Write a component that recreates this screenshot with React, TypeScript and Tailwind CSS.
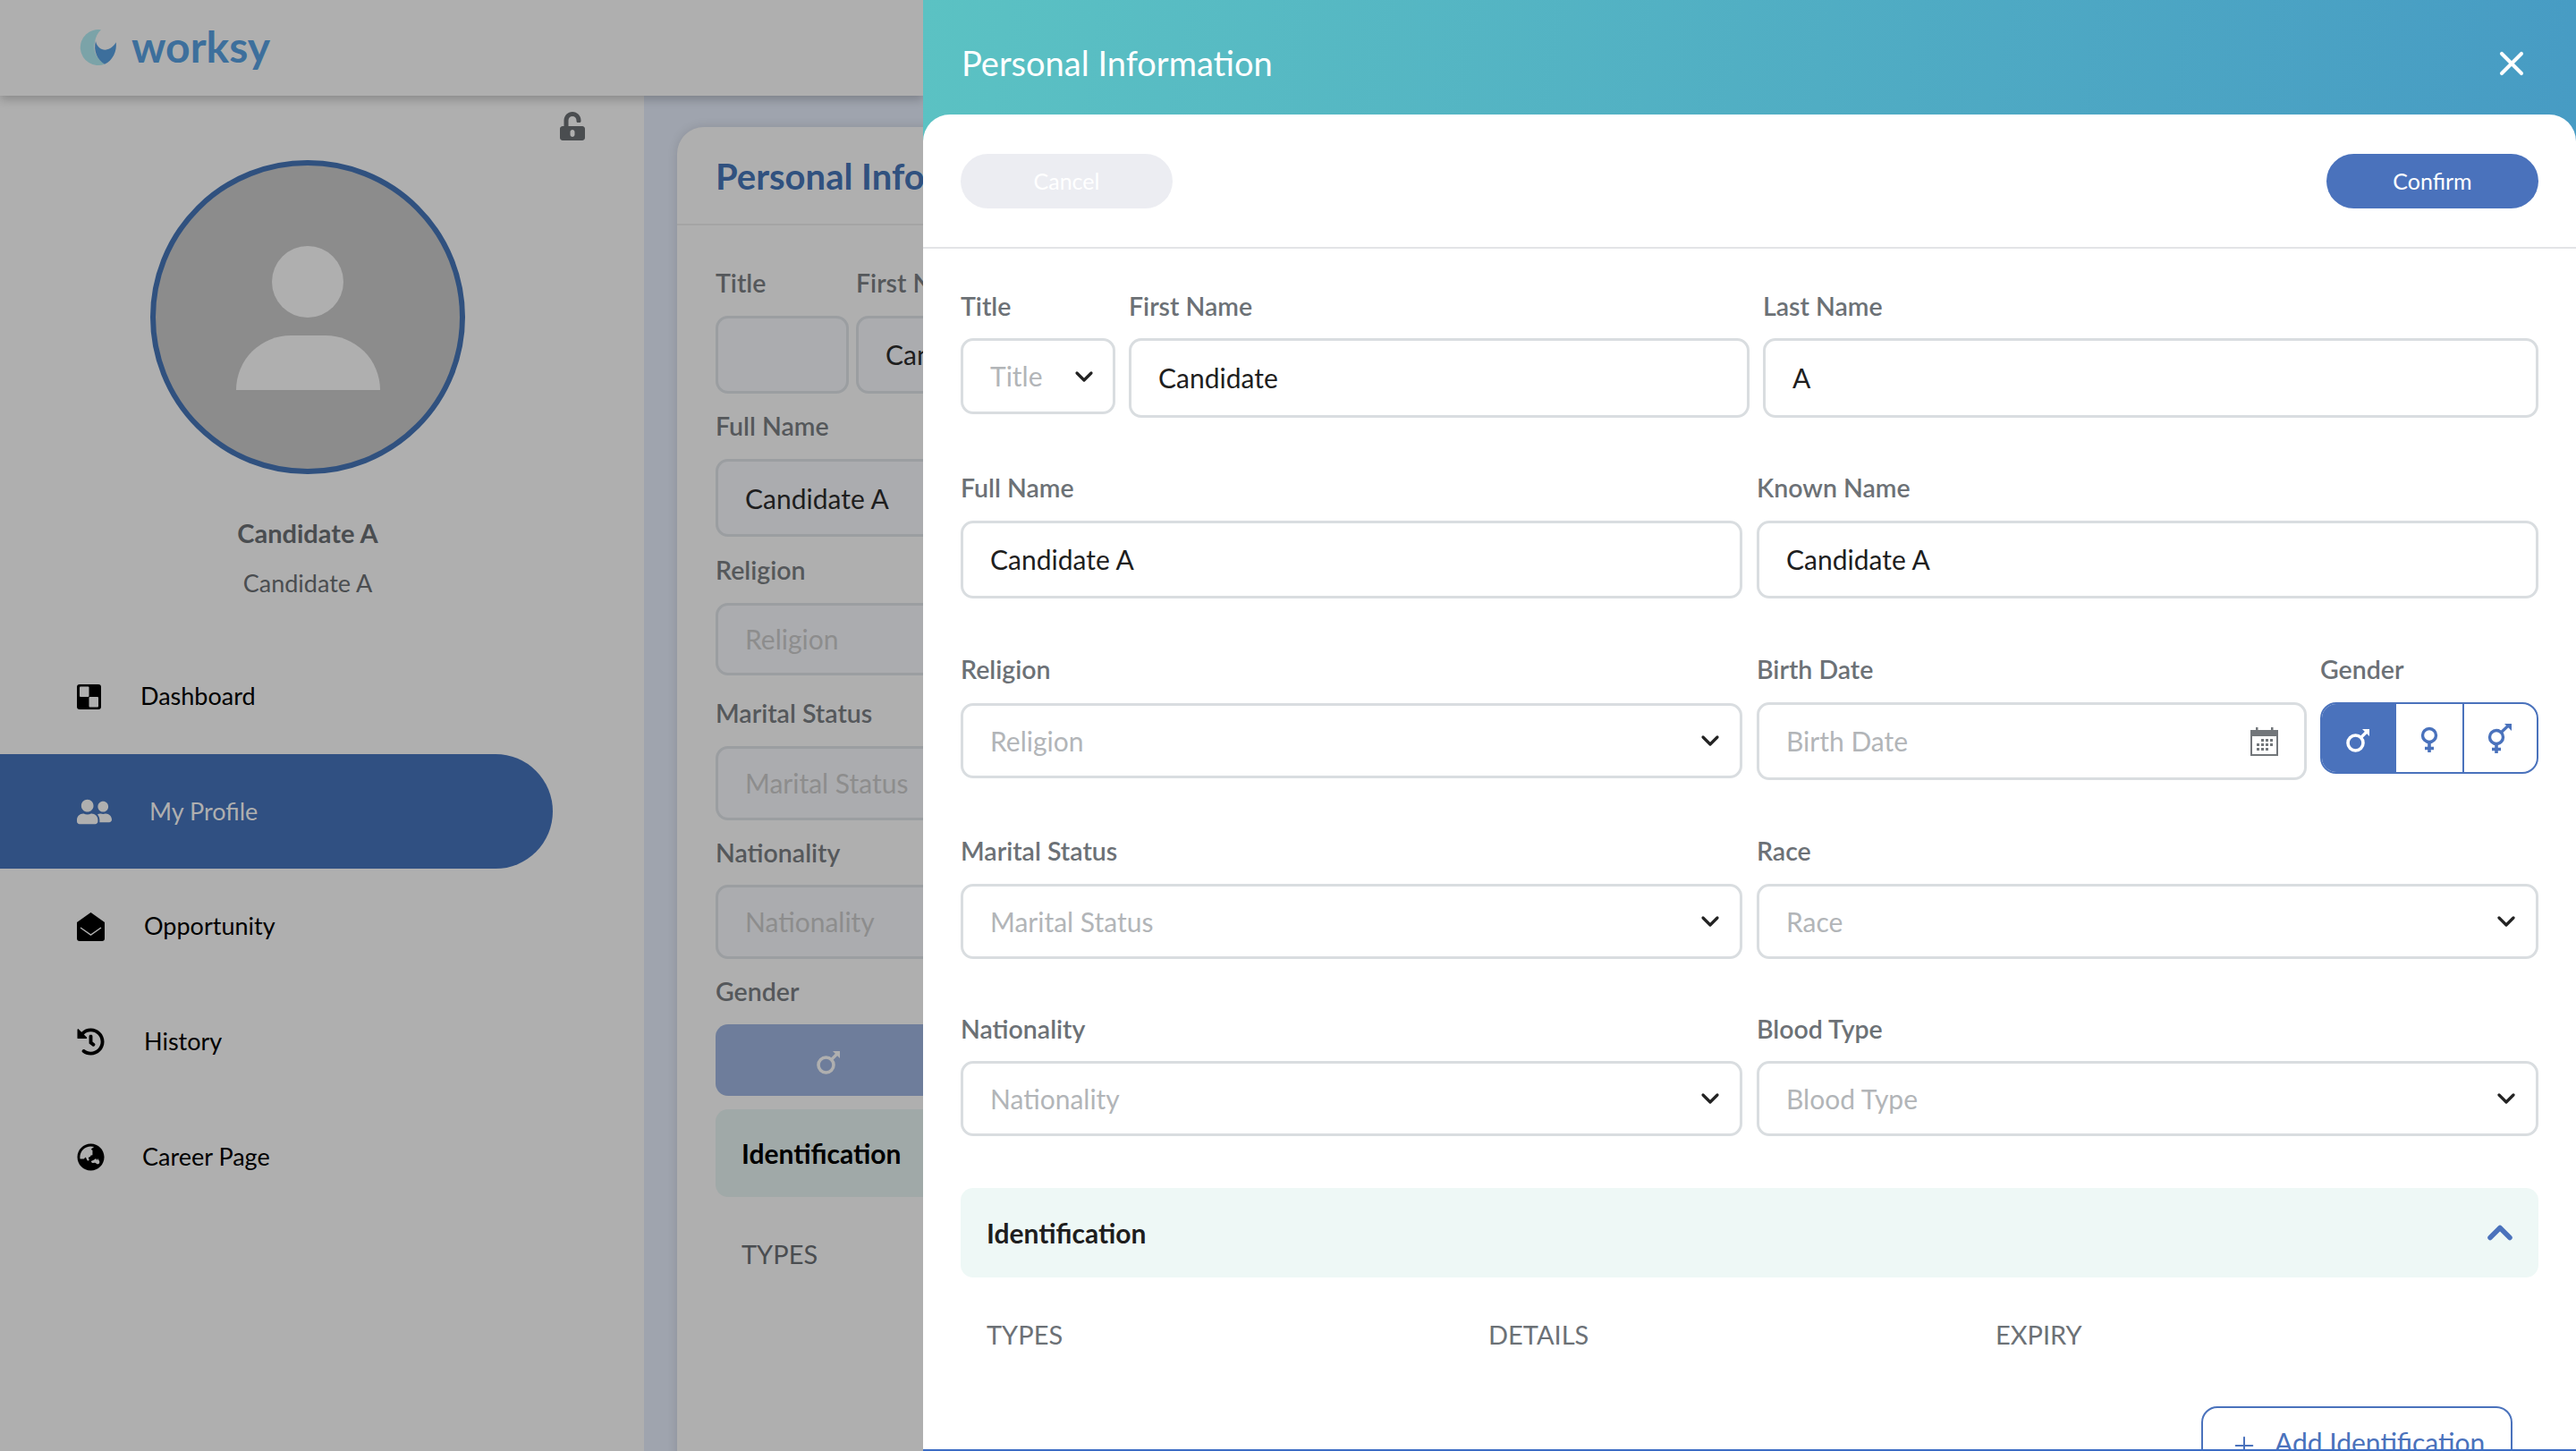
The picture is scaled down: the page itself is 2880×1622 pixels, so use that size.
import React from "react";
import { FaUnlockAlt, FaUserFriends, FaHistory, FaGlobeAsia } from "react-icons/fa";
import { ChevronDown, ChevronUp, X, Plus } from "lucide-react";

const formFont = "font-['Lato','Noto_Sans',sans-serif]";

function Logo() {
  return (
    <svg width="42" height="41" viewBox="0 0 42 41" className="shrink-0">
      <path d="M24 0.300A20 20 0 1 0 28 38.700C20 34 14 24 17 14C18 8 20 4 24 0.300Z" fill="#7ba3a8" />
      <path d="M18 13C19 19 24 23 29 22.700C34 22 38 19 40.700 14.300C42 24 37 35 28 38.700C20 34 15 24 18 13Z" fill="#3d6f9c" />
    </svg>
  );
}

function DashIcon() {
  return (
    <svg width="27" height="28" viewBox="0 0 27 28" className="shrink-0">
      <rect width="27" height="28" rx="3" fill="#000" />
      <rect x="3" y="2.500" width="10.500" height="11.500" rx="1" fill="#afafaf" />
      <rect x="13.500" y="14" width="10.500" height="11.500" rx="1" fill="#afafaf" />
    </svg>
  );
}

function MailIcon() {
  return (
    <svg width="31" height="32" viewBox="0 0 31 32" className="shrink-0">
      <path d="M15.500 0L31 11V29a3 3 0 0 1-3 3H3a3 3 0 0 1-3-3V11Z" fill="#000" />
      <path d="M4 17L15.500 25L27 17" fill="none" stroke="#afafaf" strokeWidth="1.500" />
    </svg>
  );
}

function CalendarIcon() {
  return (
    <svg width="31" height="32" viewBox="0 0 31 32" className="shrink-0" fill="#72767a">
      <path d="M0 3H31V32H0ZM2 10V30H29V10Z" fillRule="evenodd" />
      <rect x="6" y="0" width="2.500" height="6" />
      <rect x="23" y="0" width="2.500" height="6" />
      {[[12, 13], [17, 13], [22, 13], [7, 18], [12, 18], [17, 18], [22, 18], [7, 23], [12, 23], [17, 23]].map(([x, y]) => (
        <rect key={`${x}-${y}`} x={x} y={y} width="3" height="3" />
      ))}
    </svg>
  );
}

function MaleIcon({ color }: { color: string }) {
  return (
    <svg width="30" height="30" viewBox="0 0 30 30" fill="none" stroke={color}>
      <circle cx="11.500" cy="18.500" r="8.500" strokeWidth="3.600" />
      <path d="M17.500 12.500L25 5" strokeWidth="3.200" />
      <path d="M19 3H27V11Z" fill={color} stroke="none" />
    </svg>
  );
}

function FemaleIcon({ color }: { color: string }) {
  return (
    <svg width="30" height="30" viewBox="0 0 30 30" fill="none" stroke={color}>
      <circle cx="15" cy="10" r="7.500" strokeWidth="3.400" />
      <path d="M15 18V29" strokeWidth="3.600" />
      <path d="M10 24.500H20" strokeWidth="3.400" />
    </svg>
  );
}

function BothIcon({ color }: { color: string }) {
  return (
    <svg width="36" height="34" viewBox="0 0 36 34" fill="none" stroke={color}>
      <circle cx="13" cy="15" r="7.500" strokeWidth="3.400" />
      <path d="M13 23V33" strokeWidth="3.600" />
      <path d="M8 28.500H18" strokeWidth="3.400" />
      <path d="M18.500 9.500L27 1.500" strokeWidth="3.200" />
      <path d="M22 0H30V8Z" fill={color} stroke="none" />
    </svg>
  );
}

function Label({ children }: { children: React.ReactNode }) {
  return <div className="h-[36px] whitespace-nowrap text-[28.5px] font-semibold leading-[36px] text-[#6c7176]">{children}</div>;
}

function TextBox({ value, className }: { value: string; className: string }) {
  return (
    <div className={`flex items-center rounded-[14px] border-[3px] border-[#d9dde0] bg-white pl-[30px] text-[30px] text-[#1e1e1e] ${className}`}>
      {value}
    </div>
  );
}

function Select({ placeholder }: { placeholder: string }) {
  return (
    <div className="flex h-[84px] items-center justify-between rounded-[14px] border-[3px] border-[#d9dde0] bg-white pl-[30px] pr-[17px] text-[30px] text-[#b2b5b8]">
      <span>{placeholder}</span>
      <ChevronDown size={32} color="#222222" strokeWidth={2.400} />
    </div>
  );
}

function NavRow({ icon, label, textClass, heightClass, active }: { icon: React.ReactNode; label: string; textClass: string; heightClass: string; active?: boolean }) {
  return (
    <div className={`flex items-center pl-[86px] text-[27px] ${heightClass} ${active ? "w-[618px] rounded-r-[64px] bg-[#305082] text-[#afafaf]" : "text-black"}`}>
      {icon}
      <span className={textClass}>{label}</span>
    </div>
  );
}

function CardLabel({ children, className }: { children: React.ReactNode; className: string }) {
  return <div className={`h-[36px] text-[28.5px] font-semibold leading-[36px] text-[#55585b] ${className}`}>{children}</div>;
}

function CardInput({ children, className }: { children?: React.ReactNode; className: string }) {
  return <div className={`flex items-center rounded-[14px] border-[3px] border-[#9b9ea1] bg-[#abacaf] pl-[30px] text-[30px] ${className}`}>{children}</div>;
}

function BackgroundPage() {
  return (
    <div className="flex h-full w-[1032px] shrink-0 flex-col overflow-hidden bg-[#afafaf] font-['Lato',sans-serif]">
      <div className="relative z-10 flex h-[107px] shrink-0 items-center gap-[16px] bg-[#afafaf] pl-[89px] shadow-[0_4px_10px_rgba(0,0,0,0.22)]">
        <Logo />
        <span className="-mt-[4px] text-[48px] font-bold leading-none text-[#3d6f9c]">worksy</span>
      </div>
      <div className="flex min-h-0 flex-1">
        <div className="flex w-[720px] shrink-0 flex-col">
          <FaUnlockAlt size={32} color="#4a4d50" className="ml-[624px] mt-[18px]" />
          <div className="ml-[168px] mt-[22px] flex h-[351px] w-[352px] flex-col items-center rounded-full border-[6px] border-[#30517f] bg-[#8c8c8c] pt-[90px]">
            <div className="h-[80px] w-[80px] rounded-full bg-[#afafaf]" />
            <div className="mt-[20px] h-[61px] w-[161px] rounded-t-[80px] bg-[#afafaf]" />
          </div>
          <div className="w-[688px] text-center">
            <div className="mt-[48px] h-[36px] text-[29px] font-bold leading-[36px] text-[#4a4d50]">Candidate A</div>
            <div className="mt-[20px] h-[36px] text-[27px] leading-[36px] text-[#4a4d50]">Candidate A</div>
          </div>
          <div className="mt-[44px]">
            <NavRow heightClass="h-[129px]" textClass="ml-[44px]" icon={<DashIcon />} label="Dashboard" />
            <NavRow active heightClass="h-[128px]" textClass="ml-[42px]" icon={<FaUserFriends size={39} color="#afafaf" />} label="My Profile" />
            <NavRow heightClass="h-[129px]" textClass="ml-[44px]" icon={<MailIcon />} label="Opportunity" />
            <NavRow heightClass="h-[129px]" textClass="ml-[44px]" icon={<FaHistory size={31} color="#000000" />} label="History" />
            <NavRow heightClass="h-[128px]" textClass="ml-[42px]" icon={<FaGlobeAsia size={31} color="#000000" />} label="Career Page" />
          </div>
        </div>
        <div className="flex-1 bg-[#9fa4ae] pl-[37px] pt-[35px]">
          <div className="h-[1500px] w-[1200px] rounded-tl-[30px] bg-[#afafaf] shadow-[0_0_12px_rgba(0,0,0,0.12)]">
            <div className="flex h-[110px] items-center border-b-2 border-[#a4a4a4] pl-[43px] pt-[2px] text-[40px] font-bold text-[#30517f]">Personal Information</div>
            <div className="pl-[43px]">
              <div className="mt-[46px] flex gap-[8px]">
                <div className="w-[149px]">
                  <CardLabel className="mb-[19px]">Title</CardLabel>
                  <CardInput className="h-[87px]" />
                </div>
                <div className="w-[500px]">
                  <CardLabel className="mb-[19px]">First Name</CardLabel>
                  <CardInput className="h-[87px] text-[#1e1e1e]">Candidate</CardInput>
                </div>
              </div>
              <CardLabel className="mb-[19px] mt-[18px]">Full Name</CardLabel>
              <CardInput className="h-[87px] pt-[2px] text-[#1e1e1e]">Candidate A</CardInput>
              <CardLabel className="mb-[19px] mt-[19px]">Religion</CardLabel>
              <CardInput className="h-[81px] text-[#8d8d8d]">Religion</CardInput>
              <CardLabel className="mb-[19px] mt-[24px]">Marital Status</CardLabel>
              <CardInput className="h-[83px] text-[#8d8d8d]">Marital Status</CardInput>
              <CardLabel className="mb-[18px] mt-[18px]">Nationality</CardLabel>
              <CardInput className="h-[83px] text-[#8d8d8d]">Nationality</CardInput>
              <CardLabel className="mb-[19px] mt-[18px]">Gender</CardLabel>
              <div className="flex h-[80px] items-center rounded-l-[14px] bg-[#6e7d9b] pl-[112px] pt-[4px]">
                <MaleIcon color="#afafaf" />
              </div>
              <div className="mt-[15px] flex h-[98px] items-center rounded-l-[14px] bg-[#a0a9a8] pl-[29px] text-[30px] font-bold text-black">Identification</div>
              <div className="mt-[46px] h-[36px] pl-[29px] text-[29px] leading-[36px] text-[#4a4d50]">TYPES</div>
            </div>
          </div>
        </div>
      </div>
    </div>
  );
}

function Drawer() {
  return (
    <div className={`flex h-full flex-1 flex-col bg-[linear-gradient(100deg,#5bc2c3,#4496c4)] ${formFont}`}>
      <div className="flex h-[128px] shrink-0 items-center justify-between pl-[43px] pr-[50px] pt-[13px]">
        <span className="text-[38px] text-white">Personal Information</span>
        <X size={44} color="#ffffff" strokeWidth={2.200} />
      </div>
      <div className="min-h-0 flex-1 overflow-hidden rounded-t-[30px] border-b-2 border-[#3b6cc4] bg-white">
        <div className="flex h-[150px] items-start justify-between border-b-2 border-[#e3e4e7] px-[42px] pt-[44px]">
          <div className="flex h-[61px] w-[237px] items-center justify-center rounded-full bg-[#ecedf2] text-[25px] text-white">Cancel</div>
          <div className="flex h-[61px] w-[237px] items-center justify-center rounded-full bg-[#4a72bc] text-[25px] text-white">Confirm</div>
        </div>
        <div className="px-[42px]">
          <div className="mt-[46px] flex h-[143px] items-start gap-[15px]">
            <div className="w-[173px]">
              <div className="mb-[18px]"><Label>Title</Label></div>
              <div className="flex h-[85px] items-center justify-between rounded-[14px] border-[3px] border-[#d9dde0] bg-white pl-[30px] pr-[16px] text-[30px] text-[#b2b5b8]">
                <span>Title</span>
                <ChevronDown size={32} color="#222222" strokeWidth={2.400} />
              </div>
            </div>
            <div className="w-[694px]">
              <div className="mb-[18px]"><Label>First Name</Label></div>
              <TextBox className="h-[89px]" value="Candidate" />
            </div>
            <div className="flex-1">
              <div className="mb-[18px]"><Label>Last Name</Label></div>
              <TextBox className="h-[89px]" value="A" />
            </div>
          </div>
          <div className="mt-[60px] flex h-[142px] items-start gap-[16px]">
            <div className="flex-1">
              <div className="mb-[19px]"><Label>Full Name</Label></div>
              <TextBox className="h-[87px]" value="Candidate A" />
            </div>
            <div className="flex-1">
              <div className="mb-[19px]"><Label>Known Name</Label></div>
              <TextBox className="h-[87px]" value="Candidate A" />
            </div>
          </div>
          <div className="mt-[61px] flex h-[142px] items-start">
            <div className="w-[874px]">
              <div className="mb-[20px]"><Label>Religion</Label></div>
              <Select placeholder="Religion" />
            </div>
            <div className="ml-[16px] w-[615px]">
              <div className="mb-[19px]"><Label>Birth Date</Label></div>
              <div className="flex h-[87px] items-center justify-between rounded-[14px] border-[3px] border-[#d9dde0] bg-white pl-[30px] pr-[29px] text-[30px] text-[#b2b5b8]">
                <span>Birth Date</span>
                <CalendarIcon />
              </div>
            </div>
            <div className="ml-[15px] w-[244px]">
              <div className="mb-[19px]"><Label>Gender</Label></div>
              <div className="flex h-[80px] overflow-hidden rounded-[18px] border-2 border-[#4a72bc]">
                <div className="flex w-[83px] items-center justify-center bg-[#4a72bc] pr-[2px] pt-[4px]"><MaleIcon color="#ffffff" /></div>
                <div className="flex w-[76px] items-center justify-center border-r-2 border-[#4a72bc] pt-[3px]"><FemaleIcon color="#4a72bc" /></div>
                <div className="flex flex-1 items-center justify-center pt-[2px]"><BothIcon color="#4a72bc" /></div>
              </div>
            </div>
          </div>
          <div className="mt-[61px] flex h-[138px] items-start gap-[16px]">
            <div className="flex-1">
              <div className="mb-[19px]"><Label>Marital Status</Label></div>
              <Select placeholder="Marital Status" />
            </div>
            <div className="flex-1">
              <div className="mb-[19px]"><Label>Race</Label></div>
              <Select placeholder="Race" />
            </div>
          </div>
          <div className="mt-[61px] flex h-[137px] items-start gap-[16px]">
            <div className="flex-1">
              <div className="mb-[18px]"><Label>Nationality</Label></div>
              <Select placeholder="Nationality" />
            </div>
            <div className="flex-1">
              <div className="mb-[18px]"><Label>Blood Type</Label></div>
              <Select placeholder="Blood Type" />
            </div>
          </div>
          <div className="mt-[59px] flex h-[100px] items-center justify-between rounded-[14px] bg-[#eef8f6] pl-[29px] pr-[21px]">
            <span className="text-[30px] font-bold text-[#1e1e1e]">Identification</span>
            <ChevronUp size={44} color="#4a72bc" strokeWidth={3} />
          </div>
          <div className="mt-[46px] flex h-[36px] items-center pl-[29px] text-[29px] text-[#6c7176]">
            <span className="w-[561px]">TYPES</span>
            <span className="w-[567px]">DETAILS</span>
            <span>EXPIRY</span>
          </div>
          <div className="mr-[29px] mt-[62px] flex justify-end">
            <div className="flex h-[80px] w-[348px] items-start gap-[18px] rounded-[18px] border-2 border-[#4a72bc] pl-[30px] pt-[20px] text-[30px] text-[#4a72bc]">
              <Plus size={32} color="#4a72bc" strokeWidth={1.500} className="mt-[6px]" />
              <span className="whitespace-nowrap leading-[36px]">Add Identification</span>
            </div>
          </div>
        </div>
      </div>
    </div>
  );
}

export default function App() {
  return (
    <div className="flex h-[1622px] w-[2880px] overflow-hidden">
      <BackgroundPage />
      <Drawer />
    </div>
  );
}
